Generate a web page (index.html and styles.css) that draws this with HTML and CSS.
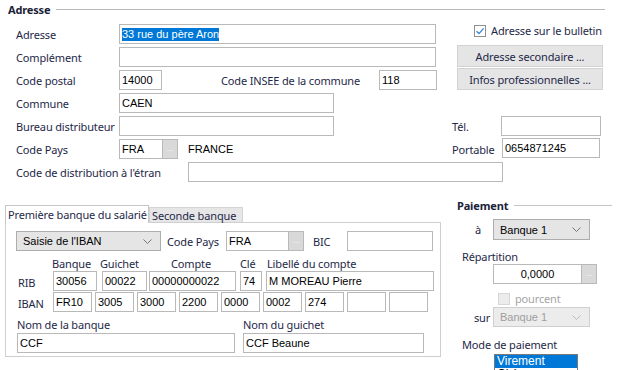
FILE: index.html
```html
<!DOCTYPE html>
<html lang="fr">
<head>
<meta charset="utf-8">
<link rel="stylesheet" href="styles.css">
</head>
<body>
<div class="page">
  <div class="ghead"><span class="gtitle">Adresse</span><span class="gline"></span></div>

  <div class="addr-top">
    <div class="lcol">
      <div class="row"><span class="lbl">Adresse</span><span class="inp w317"><span class="hl">33 rue du père Aron</span></span></div>
      <div class="row"><span class="lbl">Complément</span><span class="inp w317"></span></div>
      <div class="row"><span class="lbl">Code postal</span><span class="inp w43">14000</span><span class="lbl-insee">Code INSEE de la commune</span><span class="inp w58">118</span></div>
      <div class="row"><span class="lbl">Commune</span><span class="inp w215">CAEN</span></div>
    </div>
    <div class="rcol">
      <div class="chkrow"><span class="chk"><svg width="10" height="10" viewBox="0 0 10 10"><path d="M1.5 5.2 L4 7.6 L8.6 2.4" fill="none" stroke="#3c86d4" stroke-width="1.4"/></svg></span><span class="chktxt">Adresse sur le bulletin</span></div>
      <div class="btns">
        <span class="btn">Adresse secondaire ...</span>
        <span class="btn">Infos professionnelles ...</span>
      </div>
    </div>
  </div>

  <div class="row r5">
    <div class="lpart"><span class="lbl">Bureau distributeur</span><span class="inp w215"></span></div>
    <span class="lbl-r">Tél.</span><span class="inp w100"></span>
  </div>
  <div class="row r6">
    <div class="lpart"><span class="lbl">Code Pays</span><span class="inp w44">FRA</span><span class="dots">...</span><span class="plain">FRANCE</span></div>
    <span class="lbl-r lbl-port">Portable</span><span class="inp w98 up1">0654871245</span>
  </div>
  <div class="row r7">
    <span class="lbl lbl-wide">Code de distribution à l'étran</span><span class="inp w315"></span>
  </div>

  <div class="bottom">
    <div class="tabs">
      <div class="tabstrip">
        <span class="tab active">Première banque du salarié</span>
        <span class="tab">Seconde banque</span>
      </div>
      <div class="panel">
        <div class="prow">
          <span class="select w145"><span class="seltxt">Saisie de l'IBAN</span><svg class="chev" width="9" height="5" viewBox="0 0 9 5"><path d="M0.5 0.5 L4.5 4.5 L8.5 0.5" fill="none" stroke="#777" stroke-width="1"/></svg></span>
          <span class="plbl w65">Code Pays</span>
          <span class="inp w63">FRA</span><span class="dots">...</span>
          <span class="plbl bic">BIC</span>
          <span class="inp w86"></span>
        </div>
        <div class="hrow">
          <span class="h h-banque">Banque</span>
          <span class="h h-guichet">Guichet</span>
          <span class="h h-compte">Compte</span>
          <span class="h h-cle">Clé</span>
          <span class="h">Libellé du compte</span>
        </div>
        <div class="prow rib">
          <span class="rlbl">RIB</span>
          <span class="inp w44">30056</span>
          <span class="inp w45 ml5">00022</span>
          <span class="inp w87 ml2">00000000022</span>
          <span class="inp w22 ml4">74</span>
          <span class="inp w168 ml4">M MOREAU Pierre</span>
        </div>
        <div class="prow iban">
          <span class="rlbl">IBAN</span>
          <span class="inp w39">FR10</span>
          <span class="inp w39">3005</span>
          <span class="inp w39">3000</span>
          <span class="inp w39">2200</span>
          <span class="inp w39">0000</span>
          <span class="inp w39">0002</span>
          <span class="inp w39">274</span>
          <span class="inp w39"></span>
          <span class="inp w39"></span>
        </div>
        <div class="nrow">
          <span class="nlbl w226">Nom de la banque</span>
          <span class="nlbl">Nom du guichet</span>
        </div>
        <div class="prow names">
          <span class="inp w218">CCF</span>
          <span class="inp w181 ml8">CCF Beaune</span>
        </div>
      </div>
    </div>

    <div class="pay">
      <div class="phead"><span class="gtitle">Paiement</span><span class="pline"></span></div>
      <div class="prow2 mt6">
        <span class="plab a">à</span>
        <span class="select w97 h21"><span class="seltxt">Banque 1</span><svg class="chev" width="9" height="5" viewBox="0 0 9 5"><path d="M0.5 0.5 L4.5 4.5 L8.5 0.5" fill="none" stroke="#777" stroke-width="1"/></svg></span>
      </div>
      <div class="slbl">Répartition</div>
      <div class="prow2">
        <span class="plab"></span>
        <span class="inp w89 center">0,0000</span><span class="dots">...</span>
      </div>
      <div class="prow2 chk2row">
        <span class="plab"></span>
        <span class="chk dis"></span><span class="distxt">pourcent</span>
      </div>
      <div class="prow2">
        <span class="plab sur">sur</span>
        <span class="select w97 dis h20"><span class="seltxt">Banque 1</span><svg class="chev" width="9" height="5" viewBox="0 0 9 5"><path d="M0.5 0.5 L4.5 4.5 L8.5 0.5" fill="none" stroke="#bbb" stroke-width="1"/></svg></span>
      </div>
      <div class="slbl mode">Mode de paiement</div>
      <div class="prow2">
        <span class="plab"></span>
        <div class="listbox">
          <div class="li on">Virement</div>
          <div class="li">Chèque</div>
        </div>
      </div>
    </div>
  </div>
</div>
</body>
</html>
```

FILE: styles.css
```css
* { box-sizing: border-box; }
html, body { margin: 0; padding: 0; background: #fff; }
body {
  font-family: "Noto Sans", "Open Sans", sans-serif;
  font-size: 11px;
  letter-spacing: -0.15px;
  color: #1e2848;
}
.page { width: 619px; height: 370px; overflow: hidden; }

.ghead { display: flex; align-items: center; height: 18px; margin-left: 8px; width: 597px; }
.gtitle { font-weight: bold; color: #1a2238; white-space: nowrap; }
.gline { flex: 1; height: 1px; background: #b8b8b8; margin-left: 6px; }

.addr-top { display: flex; margin-top: 6px; }
.lcol { width: 457px; display: flex; flex-direction: column; gap: 3px; }
.row { display: flex; align-items: center; height: 20px; }
.lbl { padding-left: 16px; width: 119px; flex: none; white-space: nowrap; }
.lbl-wide { width: 188px; }
.lbl-insee { margin-left: 59px; width: 158px; white-space: nowrap; }

.inp {
  flex: none;
  height: 20px;
  border: 1px solid #b9b9b9;
  background: #fff;
  font-family: "Liberation Sans", Arial, sans-serif;
  font-size: 11px;
  letter-spacing: 0;
  color: #000;
  padding: 0 2px;
  display: flex;
  align-items: center;
  white-space: nowrap;
  overflow: hidden;
}
.inp.center { justify-content: center; }
.hl { background: #0078d7; color: #fff; line-height: 13px; }

.w22 { width: 22px; } .w39 { width: 39px; } .w43 { width: 43px; } .w44 { width: 44px; }
.w45 { width: 45px; } .w58 { width: 58px; } .w63 { width: 63px; } .w86 { width: 86px; }
.w87 { width: 87px; } .w89 { width: 89px; } .w97 { width: 97px; } .w98 { width: 98px; }
.w100 { width: 100px; } .w145 { width: 145px; } .w168 { width: 168px; } .w181 { width: 181px; }
.w215 { width: 215px; } .w218 { width: 218px; } .w315 { width: 315px; } .w317 { width: 317px; }
.w65 { width: 65px; } .w226 { width: 226px; }
.ml2 { margin-left: 2px; } .ml4 { margin-left: 4px; } .ml5 { margin-left: 5px; } .ml8 { margin-left: 8px; }
.mt6 { margin-top: 6px; }

.rcol { width: 146px; display: flex; flex-direction: column; }
.chkrow { display: flex; align-items: center; height: 13px; padding-left: 17px; }
.chk {
  width: 12px; height: 12px; border: 1px solid #8f8f8f; background: #fff;
  display: flex; align-items: center; justify-content: center; flex: none;
}
.chktxt { margin-left: 5px; white-space: nowrap; }
.btns { margin-top: 8px; display: flex; flex-direction: column; gap: 1px; }
.btn {
  height: 22px; border: 1px solid #d2d2d2; background: #e5e5e5;
  display: flex; align-items: center; justify-content: center; white-space: nowrap;
}

.r5, .r6, .r7 { margin-top: 3px; }
.lpart { width: 452px; display: flex; align-items: center; flex: none; }
.lbl-r { width: 49px; flex: none; }
.lbl-port { width: 50px; }
.up1 { margin-top: -2px; }
.dots {
  flex: none; width: 15px; height: 20px; border: 1px solid #b9b9b9; border-left: none;
  background: #d9d9d9; color: #fff; font-size: 8px; line-height: 8px; letter-spacing: 0;
  display: flex; align-items: flex-end; justify-content: center; padding-bottom: 5px;
  font-family: "Liberation Sans", Arial, sans-serif;
}
.plain { margin-left: 10px; font-family: "Liberation Sans", Arial, sans-serif; font-size: 11px; letter-spacing: 0; color: #000; }

.bottom { display: flex; align-items: flex-start; margin-top: 15px; }
.tabs { margin-left: 5px; margin-top: 8px; width: 436px; flex: none; }
.tabstrip { display: flex; align-items: flex-end; height: 17px; position: relative; z-index: 1; }
.tab {
  height: 15px; border: 1px solid #d4d4d4; border-bottom: none; background: #e6e6e6;
  padding: 0 2px; display: flex; align-items: center; white-space: nowrap; width: 94px;
}
.tab.active { height: 18px; background: #fff; width: 144px; border-color: #c6c6c6; margin-bottom: -1px; }
.panel { border: 1px solid #cfcfcf; height: 135px; padding: 8px 0 0 10px; }
.prow { display: flex; align-items: center; height: 20px; }
.select {
  flex: none; height: 20px; border: 1px solid #adadad; background: #e5e5e5;
  display: flex; align-items: center; justify-content: space-between;
  padding: 0 8px 0 6px; font-family: "Liberation Sans", Arial, sans-serif; font-size: 11px; letter-spacing: 0; color: #000;
}
.select.h21 { height: 21px; }
.select.dis { background: #ececec; border-color: #cfcfcf; color: #9e9e9e; }
.plbl { padding-left: 6px; white-space: nowrap; flex: none; }
.bic { width: 43px; padding-left: 9px; }

.hrow { display: flex; align-items: center; height: 14px; margin-top: 5px; padding-left: 36px; }
.h { white-space: nowrap; flex: none; }
.h-banque { width: 48px; } .h-guichet { width: 71px; } .h-compte { width: 69px; } .h-cle { width: 27px; }
.rib { margin-top: 1px; }
.iban { margin-top: 1px; gap: 3px; }
.rlbl { width: 37px; padding-left: 2px; flex: none; padding-top: 3px; }
.iban .rlbl { width: 34px; }
.nrow { display: flex; align-items: center; height: 14px; margin-top: 5px; padding-left: 1px; }
.nlbl { flex: none; white-space: nowrap; }
.names { margin-top: 2px; padding-left: 1px; }

.pay { margin-left: 16px; width: 155px; flex: none; }
.phead { display: flex; align-items: center; height: 16px; }
.pline { flex: 1; height: 1px; background: #c4c4c4; margin-left: 6px; }
.prow2 { display: flex; align-items: center; }
.plab { width: 36px; flex: none; }
.plab.a { padding-left: 18px; }
.plab.sur { padding-left: 17px; }
.slbl { padding-left: 5px; height: 14px; line-height: 14px; margin-top: 10px; white-space: nowrap; }
.chk2row { margin-top: 8px; height: 13px; }
.chk2row .plab { width: 41px; }
.chk.dis { border-color: #d6d6d6; background: #ececec; }
.distxt { margin-left: 5px; color: #a4a4a4; }
.chk2row + .prow2 { margin-top: 2px; }
.mode { margin-top: 11px; }
.listbox { width: 84px; height: 30px; border: 1px solid #7a7a7a; margin-top: 2px; margin-left: 1px; font-family: "Liberation Sans", Arial, sans-serif; font-size: 12px; letter-spacing: 0; color: #000; overflow: hidden; }
.li { height: 13px; line-height: 13px; padding-left: 2px; }
.li.on { background: #0078d7; color: #fff; }
```
